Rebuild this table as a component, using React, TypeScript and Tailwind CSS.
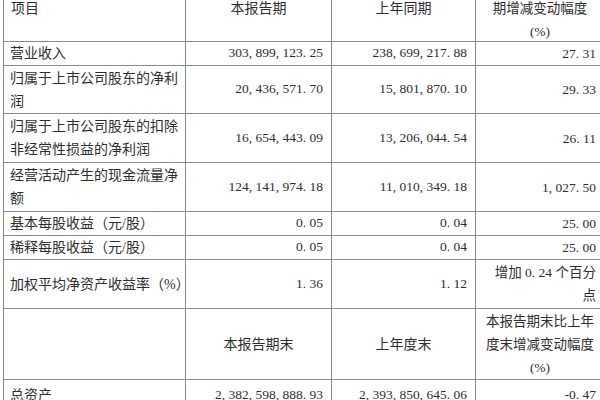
const cjk = '"Liberation Serif", "Noto Sans CJK SC", serif'

type Row = { label: string[]; cur: string; prev: string; chg: string[] }

const rows: Row[] = [
  { label: ['营业收入'], cur: '303, 899, 123. 25', prev: '238, 699, 217. 88', chg: ['27. 31'] },
  { label: ['归属于上市公司股东的净利', '润'], cur: '20, 436, 571. 70', prev: '15, 801, 870. 10', chg: ['29. 33'] },
  { label: ['归属于上市公司股东的扣除', '非经常性损益的净利润'], cur: '16, 654, 443. 09', prev: '13, 206, 044. 54', chg: ['26. 11'] },
  { label: ['经营活动产生的现金流量净', '额'], cur: '124, 141, 974. 18', prev: '11, 010, 349. 18', chg: ['1, 027. 50'] },
  { label: ['基本每股收益（元/股）'], cur: '0. 05', prev: '0. 04', chg: ['25. 00'] },
  { label: ['稀释每股收益（元/股）'], cur: '0. 05', prev: '0. 04', chg: ['25. 00'] },
  { label: ['加权平均净资产收益率（%）'], cur: '1. 36', prev: '1. 12', chg: ['增加 0. 24 个百分', '点'] },
]

function Lines({ lines }: { lines: string[] }) {
  return (
    <div className="leading-[23px] whitespace-nowrap">
      {lines.map((l, i) => <div key={i}>{l}</div>)}
    </div>
  )
}

export default function App() {
  return (
    <div className="w-[600px] h-[400px] overflow-hidden bg-white text-[#2e2e2e]" style={{ fontFamily: cjk }}>
      <div className="ml-[3px] -mt-[26px] w-[602px] grid grid-cols-[181px_145px_143px_128px] grid-rows-[66px_23px_47px_48px_48px_23px_23px_48px_70px_30px] gap-px bg-[#888] p-px text-[14px]">
        {/* header */}
        <div className="bg-white flex items-center px-[7px]">项目</div>
        <div className="bg-white flex items-center justify-center">本报告期</div>
        <div className="bg-white flex items-center justify-center">上年同期</div>
        <div className="bg-white flex items-center justify-center text-center text-[13.5px]">
          <Lines lines={['本报告期比上年同', '期增减变动幅度', '(%)']} />
        </div>

        {rows.map((r, i) => (
          <div key={i} className="contents">
            <div className="bg-white flex items-center px-[6px]"><Lines lines={r.label} /></div>
            <div className="bg-white flex items-center justify-end pr-[8px] text-[13.5px]">{r.cur}</div>
            <div className="bg-white flex items-center justify-end pr-[8px] text-[13.5px]">{r.prev}</div>
            <div className="bg-white flex items-center justify-end pr-[8px] text-[13.5px] text-right"><Lines lines={r.chg} /></div>
          </div>
        ))}

        {/* second header */}
        <div className="bg-white" />
        <div className="bg-white flex items-center justify-center">本报告期末</div>
        <div className="bg-white flex items-center justify-center">上年度末</div>
        <div className="bg-white flex items-center justify-center text-center text-[13.5px]">
          <Lines lines={['本报告期末比上年', '度末增减变动幅度', '(%)']} />
        </div>

        <div className="bg-white flex items-start pt-[5px] px-[6px]">总资产</div>
        <div className="bg-white flex items-start pt-[5px] justify-end pr-[8px] text-[13.5px]">2, 382, 598, 888. 93</div>
        <div className="bg-white flex items-start pt-[5px] justify-end pr-[8px] text-[13.5px]">2, 393, 850, 645. 06</div>
        <div className="bg-white flex items-start pt-[5px] justify-end pr-[8px] text-[13.5px]">-0. 47</div>
      </div>
    </div>
  )
}
